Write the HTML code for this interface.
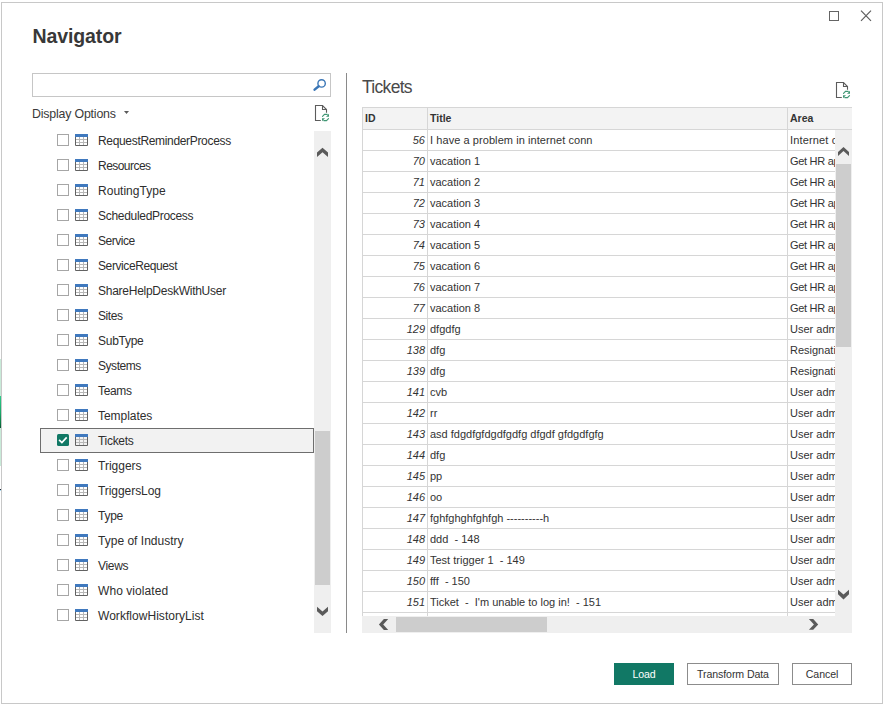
<!DOCTYPE html>
<html><head><meta charset="utf-8"><title>Navigator</title>
<style>
*{margin:0;padding:0;box-sizing:border-box}
html,body{width:887px;height:710px;overflow:hidden;background:#fff}
body{position:relative;font-family:"Liberation Sans",sans-serif;color:#333}
.abs{position:absolute}
#dlg{position:absolute;left:1px;top:2px;width:882px;height:702px;border:1px solid #c8c8c8}
#title{position:absolute;left:32.6px;top:23.3px;font-size:19.5px;font-weight:bold;line-height:26px;color:#383838;letter-spacing:-0.12px}
#search{position:absolute;left:32px;top:73px;width:299px;height:24px;border:1px solid #c6c6c6}
#dispopt{position:absolute;left:32px;top:106.3px;font-size:12.4px;letter-spacing:-0.2px;line-height:16px;color:#3a3a3a}
.cbx{position:absolute;left:57px;width:12px;height:12px;border:1px solid #a6a6a6;background:#fff}
.cb,.ti{position:absolute}
.li{position:absolute;left:98px;height:25px;line-height:25px;padding-top:1px;font-size:12px;letter-spacing:-0.3px;color:#2e2e2e;white-space:nowrap}
.selbox{position:absolute;left:40px;width:274px;height:25px;border:1px solid #6e6e6e;background:#f2f2f2}
#lsb{position:absolute;left:314px;top:131px;width:17px;height:502px;background:#efefef}
#lthumb{position:absolute;left:315px;top:431px;width:15px;height:154px;background:#cdcdcd}
#sep{position:absolute;left:346px;top:73px;width:1px;height:560px;background:#8a8a8a}
#ttl2{position:absolute;left:362px;top:75.8px;font-size:17.5px;line-height:22px;color:#4a4a4a;letter-spacing:-0.7px}
#tbl{position:absolute;left:362px;top:107px;width:490px;height:526px;overflow:hidden}
.hdr{position:absolute;left:0;top:0;height:23px;width:490px;background:#f3f3f3;border-top:1px solid #d6d6d6;border-bottom:1px solid #d6d6d6}
.hdr div{position:absolute;top:0;height:21px;line-height:21px;font-size:10.5px;font-weight:bold;color:#333}
.row{position:absolute;left:0;width:490px;height:21px;border-bottom:1px solid #d6d6d6}
.row div{position:absolute;top:0;height:20px;line-height:20px;font-size:11px;color:#333;white-space:nowrap;overflow:hidden}
.c1{left:0;width:65px;border-left:1px solid #d6d6d6;text-align:right;padding-right:2px;font-style:italic}
.c2{left:65px;width:360px;border-left:1px solid #d6d6d6;padding-left:2px}
.c3{left:425px;width:65px;border-left:1px solid #d6d6d6;padding-left:2px}
#vsb{position:absolute;left:835px;top:130px;width:17px;height:503px;background:#efefef}
#vthumb{position:absolute;left:836px;top:164px;width:15px;height:183px;background:#cdcdcd}
#hsb{position:absolute;left:362px;top:616px;width:490px;height:17px;background:#efefef}
#hthumb{position:absolute;left:396px;top:617px;width:151px;height:15px;background:#cdcdcd}
.btn{position:absolute;top:663px;height:22px;border:1px solid #8c8c8c;background:#fff;font-size:10.6px;letter-spacing:-0.1px;line-height:21px;padding-top:0.4px;text-align:center;color:#333}
#load{left:614px;width:60px;background:#117865;border-color:#117865;color:#fff}
#xform{left:687px;width:92px}
#cancel{left:792px;width:60px}
</style></head>
<body>
<div id="dlg"></div>
<div style="position:absolute;left:0;top:359px;width:1px;height:107px;background:linear-gradient(#c8ead8 0,#c8ead8 37px,#30c98a 37px,#1ba86b 50%,#0c7a45 60%,#0a5532 69px,#c8ead8 69px,#c8ead8 100%)"></div>
<div style="position:absolute;left:0;top:489px;width:1px;height:1px;background:#1e2a3a"></div><div style="position:absolute;left:0;top:490px;width:1px;height:1px;background:#b0dcf0"></div>
<div id="title">Navigator</div>
<div id="search"></div>
<div id="dispopt">Display Options</div>
<div class="cbx" style="top:134px"></div><svg class="ti" style="left:75px;top:134px" width="13" height="12" viewBox="0 0 13 12">
<rect x="0" y="0" width="13" height="3" fill="#4079be"/>
<path d="M0.5 3V11.5H12.5V3" fill="none" stroke="#626262"/>
<path d="M4.5 3v8M8.5 3v8M1 5.5h11M1 8.5h11" stroke="#b8b8b8" stroke-width="1"/>
</svg><div class="li" style="top:128px;letter-spacing:-0.329px">RequestReminderProcess</div><div class="cbx" style="top:159px"></div><svg class="ti" style="left:75px;top:159px" width="13" height="12" viewBox="0 0 13 12">
<rect x="0" y="0" width="13" height="3" fill="#4079be"/>
<path d="M0.5 3V11.5H12.5V3" fill="none" stroke="#626262"/>
<path d="M4.5 3v8M8.5 3v8M1 5.5h11M1 8.5h11" stroke="#b8b8b8" stroke-width="1"/>
</svg><div class="li" style="top:153px;letter-spacing:-0.537px">Resources</div><div class="cbx" style="top:184px"></div><svg class="ti" style="left:75px;top:184px" width="13" height="12" viewBox="0 0 13 12">
<rect x="0" y="0" width="13" height="3" fill="#4079be"/>
<path d="M0.5 3V11.5H12.5V3" fill="none" stroke="#626262"/>
<path d="M4.5 3v8M8.5 3v8M1 5.5h11M1 8.5h11" stroke="#b8b8b8" stroke-width="1"/>
</svg><div class="li" style="top:178px;letter-spacing:0.02px">RoutingType</div><div class="cbx" style="top:209px"></div><svg class="ti" style="left:75px;top:209px" width="13" height="12" viewBox="0 0 13 12">
<rect x="0" y="0" width="13" height="3" fill="#4079be"/>
<path d="M0.5 3V11.5H12.5V3" fill="none" stroke="#626262"/>
<path d="M4.5 3v8M8.5 3v8M1 5.5h11M1 8.5h11" stroke="#b8b8b8" stroke-width="1"/>
</svg><div class="li" style="top:203px;letter-spacing:-0.3px">ScheduledProcess</div><div class="cbx" style="top:234px"></div><svg class="ti" style="left:75px;top:234px" width="13" height="12" viewBox="0 0 13 12">
<rect x="0" y="0" width="13" height="3" fill="#4079be"/>
<path d="M0.5 3V11.5H12.5V3" fill="none" stroke="#626262"/>
<path d="M4.5 3v8M8.5 3v8M1 5.5h11M1 8.5h11" stroke="#b8b8b8" stroke-width="1"/>
</svg><div class="li" style="top:228px;letter-spacing:-0.483px">Service</div><div class="cbx" style="top:259px"></div><svg class="ti" style="left:75px;top:259px" width="13" height="12" viewBox="0 0 13 12">
<rect x="0" y="0" width="13" height="3" fill="#4079be"/>
<path d="M0.5 3V11.5H12.5V3" fill="none" stroke="#626262"/>
<path d="M4.5 3v8M8.5 3v8M1 5.5h11M1 8.5h11" stroke="#b8b8b8" stroke-width="1"/>
</svg><div class="li" style="top:253px;letter-spacing:-0.4px">ServiceRequest</div><div class="cbx" style="top:284px"></div><svg class="ti" style="left:75px;top:284px" width="13" height="12" viewBox="0 0 13 12">
<rect x="0" y="0" width="13" height="3" fill="#4079be"/>
<path d="M0.5 3V11.5H12.5V3" fill="none" stroke="#626262"/>
<path d="M4.5 3v8M8.5 3v8M1 5.5h11M1 8.5h11" stroke="#b8b8b8" stroke-width="1"/>
</svg><div class="li" style="top:278px;letter-spacing:-0.26px">ShareHelpDeskWithUser</div><div class="cbx" style="top:309px"></div><svg class="ti" style="left:75px;top:309px" width="13" height="12" viewBox="0 0 13 12">
<rect x="0" y="0" width="13" height="3" fill="#4079be"/>
<path d="M0.5 3V11.5H12.5V3" fill="none" stroke="#626262"/>
<path d="M4.5 3v8M8.5 3v8M1 5.5h11M1 8.5h11" stroke="#b8b8b8" stroke-width="1"/>
</svg><div class="li" style="top:303px;letter-spacing:-0.4px">Sites</div><div class="cbx" style="top:334px"></div><svg class="ti" style="left:75px;top:334px" width="13" height="12" viewBox="0 0 13 12">
<rect x="0" y="0" width="13" height="3" fill="#4079be"/>
<path d="M0.5 3V11.5H12.5V3" fill="none" stroke="#626262"/>
<path d="M4.5 3v8M8.5 3v8M1 5.5h11M1 8.5h11" stroke="#b8b8b8" stroke-width="1"/>
</svg><div class="li" style="top:328px;letter-spacing:-0.267px">SubType</div><div class="cbx" style="top:359px"></div><svg class="ti" style="left:75px;top:359px" width="13" height="12" viewBox="0 0 13 12">
<rect x="0" y="0" width="13" height="3" fill="#4079be"/>
<path d="M0.5 3V11.5H12.5V3" fill="none" stroke="#626262"/>
<path d="M4.5 3v8M8.5 3v8M1 5.5h11M1 8.5h11" stroke="#b8b8b8" stroke-width="1"/>
</svg><div class="li" style="top:353px;letter-spacing:-0.45px">Systems</div><div class="cbx" style="top:384px"></div><svg class="ti" style="left:75px;top:384px" width="13" height="12" viewBox="0 0 13 12">
<rect x="0" y="0" width="13" height="3" fill="#4079be"/>
<path d="M0.5 3V11.5H12.5V3" fill="none" stroke="#626262"/>
<path d="M4.5 3v8M8.5 3v8M1 5.5h11M1 8.5h11" stroke="#b8b8b8" stroke-width="1"/>
</svg><div class="li" style="top:378px;letter-spacing:-0.325px">Teams</div><div class="cbx" style="top:409px"></div><svg class="ti" style="left:75px;top:409px" width="13" height="12" viewBox="0 0 13 12">
<rect x="0" y="0" width="13" height="3" fill="#4079be"/>
<path d="M0.5 3V11.5H12.5V3" fill="none" stroke="#626262"/>
<path d="M4.5 3v8M8.5 3v8M1 5.5h11M1 8.5h11" stroke="#b8b8b8" stroke-width="1"/>
</svg><div class="li" style="top:403px;letter-spacing:-0.05px">Templates</div><div class="selbox" style="top:428px"></div><svg class="cb" style="left:57px;top:434px" width="12" height="12" viewBox="0 0 12 12"><rect x="0" y="0" width="12" height="12" rx="1.5" fill="#117865"/><path d="M2.1 5.8L4.9 8.5L9.7 3.4" fill="none" stroke="#fff" stroke-width="1.7"/></svg><svg class="ti" style="left:75px;top:434px" width="13" height="12" viewBox="0 0 13 12">
<rect x="0" y="0" width="13" height="3" fill="#4079be"/>
<path d="M0.5 3V11.5H12.5V3" fill="none" stroke="#626262"/>
<path d="M4.5 3v8M8.5 3v8M1 5.5h11M1 8.5h11" stroke="#b8b8b8" stroke-width="1"/>
</svg><div class="li" style="top:428px;letter-spacing:-0.3px">Tickets</div><div class="cbx" style="top:459px"></div><svg class="ti" style="left:75px;top:459px" width="13" height="12" viewBox="0 0 13 12">
<rect x="0" y="0" width="13" height="3" fill="#4079be"/>
<path d="M0.5 3V11.5H12.5V3" fill="none" stroke="#626262"/>
<path d="M4.5 3v8M8.5 3v8M1 5.5h11M1 8.5h11" stroke="#b8b8b8" stroke-width="1"/>
</svg><div class="li" style="top:453px;letter-spacing:0.0px">Triggers</div><div class="cbx" style="top:484px"></div><svg class="ti" style="left:75px;top:484px" width="13" height="12" viewBox="0 0 13 12">
<rect x="0" y="0" width="13" height="3" fill="#4079be"/>
<path d="M0.5 3V11.5H12.5V3" fill="none" stroke="#626262"/>
<path d="M4.5 3v8M8.5 3v8M1 5.5h11M1 8.5h11" stroke="#b8b8b8" stroke-width="1"/>
</svg><div class="li" style="top:478px;letter-spacing:-0.06px">TriggersLog</div><div class="cbx" style="top:509px"></div><svg class="ti" style="left:75px;top:509px" width="13" height="12" viewBox="0 0 13 12">
<rect x="0" y="0" width="13" height="3" fill="#4079be"/>
<path d="M0.5 3V11.5H12.5V3" fill="none" stroke="#626262"/>
<path d="M4.5 3v8M8.5 3v8M1 5.5h11M1 8.5h11" stroke="#b8b8b8" stroke-width="1"/>
</svg><div class="li" style="top:503px;letter-spacing:-0.267px">Type</div><div class="cbx" style="top:534px"></div><svg class="ti" style="left:75px;top:534px" width="13" height="12" viewBox="0 0 13 12">
<rect x="0" y="0" width="13" height="3" fill="#4079be"/>
<path d="M0.5 3V11.5H12.5V3" fill="none" stroke="#626262"/>
<path d="M4.5 3v8M8.5 3v8M1 5.5h11M1 8.5h11" stroke="#b8b8b8" stroke-width="1"/>
</svg><div class="li" style="top:528px;letter-spacing:0.013px">Type of Industry</div><div class="cbx" style="top:559px"></div><svg class="ti" style="left:75px;top:559px" width="13" height="12" viewBox="0 0 13 12">
<rect x="0" y="0" width="13" height="3" fill="#4079be"/>
<path d="M0.5 3V11.5H12.5V3" fill="none" stroke="#626262"/>
<path d="M4.5 3v8M8.5 3v8M1 5.5h11M1 8.5h11" stroke="#b8b8b8" stroke-width="1"/>
</svg><div class="li" style="top:553px;letter-spacing:-0.325px">Views</div><div class="cbx" style="top:584px"></div><svg class="ti" style="left:75px;top:584px" width="13" height="12" viewBox="0 0 13 12">
<rect x="0" y="0" width="13" height="3" fill="#4079be"/>
<path d="M0.5 3V11.5H12.5V3" fill="none" stroke="#626262"/>
<path d="M4.5 3v8M8.5 3v8M1 5.5h11M1 8.5h11" stroke="#b8b8b8" stroke-width="1"/>
</svg><div class="li" style="top:578px;letter-spacing:0.064px">Who violated</div><div class="cbx" style="top:609px"></div><svg class="ti" style="left:75px;top:609px" width="13" height="12" viewBox="0 0 13 12">
<rect x="0" y="0" width="13" height="3" fill="#4079be"/>
<path d="M0.5 3V11.5H12.5V3" fill="none" stroke="#626262"/>
<path d="M4.5 3v8M8.5 3v8M1 5.5h11M1 8.5h11" stroke="#b8b8b8" stroke-width="1"/>
</svg><div class="li" style="top:603px;letter-spacing:0.039px">WorkflowHistoryList</div>
<div id="lsb"></div>
<div id="lthumb"></div>
<div id="sep"></div>
<div id="ttl2">Tickets</div>
<div id="tbl">
<div class="hdr"><div style="left:0;width:65px;border-left:1px solid #d6d6d6;padding-left:2px">ID</div><div style="left:65px;width:360px;border-left:1px solid #d6d6d6;padding-left:2px">Title</div><div style="left:425px;width:65px;border-left:1px solid #d6d6d6;padding-left:2px">Area</div></div>
<div style="position:absolute;left:0;top:23px;width:490px">
<div class="row" style="top:0px"><div class="c1">56</div><div class="c2" style="letter-spacing:0.07px">I have a problem in internet conn</div><div class="c3" style="letter-spacing:0.15px">Internet c</div></div><div class="row" style="top:21px"><div class="c1">70</div><div class="c2">vacation 1</div><div class="c3" style="letter-spacing:-0.3px">Get HR ap</div></div><div class="row" style="top:42px"><div class="c1">71</div><div class="c2">vacation 2</div><div class="c3" style="letter-spacing:-0.3px">Get HR ap</div></div><div class="row" style="top:63px"><div class="c1">72</div><div class="c2">vacation 3</div><div class="c3" style="letter-spacing:-0.3px">Get HR ap</div></div><div class="row" style="top:84px"><div class="c1">73</div><div class="c2">vacation 4</div><div class="c3" style="letter-spacing:-0.3px">Get HR ap</div></div><div class="row" style="top:105px"><div class="c1">74</div><div class="c2">vacation 5</div><div class="c3" style="letter-spacing:-0.3px">Get HR ap</div></div><div class="row" style="top:126px"><div class="c1">75</div><div class="c2">vacation 6</div><div class="c3" style="letter-spacing:-0.3px">Get HR ap</div></div><div class="row" style="top:147px"><div class="c1">76</div><div class="c2">vacation 7</div><div class="c3" style="letter-spacing:-0.3px">Get HR ap</div></div><div class="row" style="top:168px"><div class="c1">77</div><div class="c2">vacation 8</div><div class="c3" style="letter-spacing:-0.3px">Get HR ap</div></div><div class="row" style="top:189px"><div class="c1">129</div><div class="c2">dfgdfg</div><div class="c3">User adm</div></div><div class="row" style="top:210px"><div class="c1">138</div><div class="c2">dfg</div><div class="c3">Resignati</div></div><div class="row" style="top:231px"><div class="c1">139</div><div class="c2">dfg</div><div class="c3">Resignati</div></div><div class="row" style="top:252px"><div class="c1">141</div><div class="c2">cvb</div><div class="c3">User adm</div></div><div class="row" style="top:273px"><div class="c1">142</div><div class="c2">rr</div><div class="c3">User adm</div></div><div class="row" style="top:294px"><div class="c1">143</div><div class="c2">asd fdgdfgfdgdfgdfg dfgdf gfdgdfgfg</div><div class="c3">User adm</div></div><div class="row" style="top:315px"><div class="c1">144</div><div class="c2">dfg</div><div class="c3">User adm</div></div><div class="row" style="top:336px"><div class="c1">145</div><div class="c2">pp</div><div class="c3">User adm</div></div><div class="row" style="top:357px"><div class="c1">146</div><div class="c2">oo</div><div class="c3">User adm</div></div><div class="row" style="top:378px"><div class="c1">147</div><div class="c2">fghfghghfghfgh ----------h</div><div class="c3">User adm</div></div><div class="row" style="top:399px"><div class="c1">148</div><div class="c2">ddd &nbsp;- 148</div><div class="c3">User adm</div></div><div class="row" style="top:420px"><div class="c1">149</div><div class="c2">Test trigger 1 &nbsp;- 149</div><div class="c3">User adm</div></div><div class="row" style="top:441px"><div class="c1">150</div><div class="c2">fff &nbsp;- 150</div><div class="c3">User adm</div></div><div class="row" style="top:462px"><div class="c1">151</div><div class="c2">Ticket &nbsp;- &nbsp;I'm unable to log in! &nbsp;- 151</div><div class="c3">User adm</div></div><div class="row" style="top:483px"><div class="c1"></div><div class="c2"></div><div class="c3"></div></div>
</div>
</div>
<div id="vsb"></div>
<div id="vthumb"></div>
<div id="hsb"></div>
<div id="hthumb"></div>
<div class="btn" id="load">Load</div>
<div class="btn" id="xform">Transform Data</div>
<div class="btn" id="cancel">Cancel</div>
<svg style="position:absolute;left:0;top:0" width="887" height="710" viewBox="0 0 887 710">
<rect x="829.5" y="11.5" width="9" height="9" fill="none" stroke="#646464" stroke-width="1"/>
<path d="M861 10.7L871 20.9M871 10.7L861 20.9" stroke="#5e5e5e" stroke-width="1.2"/>
<circle cx="321.6" cy="83.4" r="3.7" fill="none" stroke="#3a76b6" stroke-width="1.4"/>
<path d="M318.7 86.3L314.6 89.6" stroke="#3a76b6" stroke-width="2.5" stroke-linecap="round"/>
<path d="M124 111H129L126.5 114Z" fill="#5a5a5a"/>
<g>
<path d="M320.8 120.5H315.5V105.5H322.5L326.5 109.5V112.8" fill="none" stroke="#5c5c5c" stroke-width="1.1"/>
<path d="M322.5 105.5V109.5H326.5" fill="none" stroke="#5c5c5c" stroke-width="1.1"/>
<path d="M322.5 116.3L324.5 114.4H327.2" fill="none" stroke="#3f9673" stroke-width="1.15" stroke-linecap="round"/>
<path d="M329 113.8V116.8H326Z" fill="#3f9673"/>
<path d="M328.5 118.7L326.5 120.6H323.8" fill="none" stroke="#3f9673" stroke-width="1.15" stroke-linecap="round"/>
<path d="M322 121.2V118.2H325Z" fill="#3f9673"/>
</g>
<g transform="translate(521,-23)">
<path d="M320.8 120.5H315.5V105.5H322.5L326.5 109.5V112.8" fill="none" stroke="#5c5c5c" stroke-width="1.1"/>
<path d="M322.5 105.5V109.5H326.5" fill="none" stroke="#5c5c5c" stroke-width="1.1"/>
<path d="M322.5 116.3L324.5 114.4H327.2" fill="none" stroke="#3f9673" stroke-width="1.15" stroke-linecap="round"/>
<path d="M329 113.8V116.8H326Z" fill="#3f9673"/>
<path d="M328.5 118.7L326.5 120.6H323.8" fill="none" stroke="#3f9673" stroke-width="1.15" stroke-linecap="round"/>
<path d="M322 121.2V118.2H325Z" fill="#3f9673"/>
</g>
<path d="M317 152.4L322.5 147.8L328 152.4V156.9L322.5 152.2L317 156.9Z" fill="#5a5a5a"/>
<path d="M317 606.8L322.5 611.6L328 606.8V611.3L322.5 616L317 611.3Z" fill="#5a5a5a"/>
<path d="M838 152.1L843.5 147L849 152.1V156L843.5 151L838 156Z" fill="#5a5a5a"/>
<path d="M838 589.8L843.5 594.6L849 589.8V594.3L843.5 599.4L838 594.3Z" fill="#5a5a5a"/>
<path d="M388.2 618.9H383.9L378.9 624.4L383.9 629.9H388.2L383.2 624.4Z" fill="#5a5a5a"/>
<path d="M808.9 619H813.2L818.2 624.4L813.2 629.8H808.9L813.9 624.4Z" fill="#5a5a5a"/>
</svg>

</body></html>
